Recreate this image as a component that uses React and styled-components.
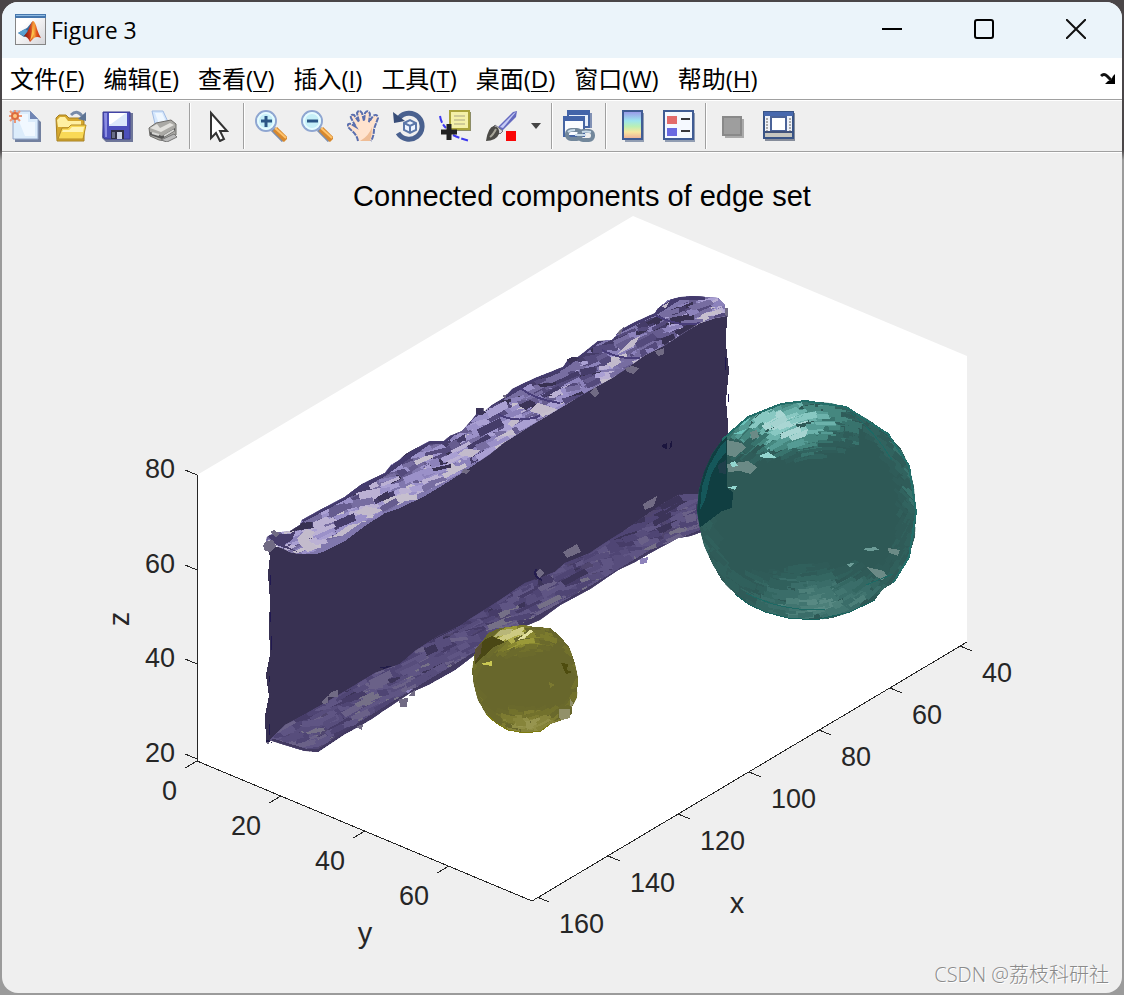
import styled, { createGlobalStyle } from "styled-components";

const GlobalStyle = createGlobalStyle`
  * {
    box-sizing: border-box;
  }

  body {
    margin: 0;
    background: linear-gradient(#4a4648 0, #4a4648 150px, #9b9b9b 160px, #9b9b9b 100%);
    font-family: "Open Sans", "Noto Sans CJK SC", sans-serif;
    color: #000;
  }
`;

const Window = styled.main`
  display: flex;
  flex-direction: column;
  min-height: calc(100vh - 4px);
  margin: 2px;
  background: #efefef;
  border-radius: 16px;
  overflow: hidden;
`;

const TitleBar = styled.header`
  display: flex;
  align-items: center;
  height: 56px;
  padding-left: 13px;
  background: #ebf4fa;
`;

const Title = styled.h1`
  flex: 1;
  margin: 0 0 0 4px;
  font-size: 23px;
  font-weight: 400;
`;

const WindowButton = styled.button`
  display: flex;
  align-items: center;
  justify-content: center;
  width: 92px;
  height: 54px;
  margin-bottom: 2px;
  padding: 0;
  border: none;
  background: transparent;
`;

const MenuBar = styled.nav`
  display: flex;
  align-items: center;
  gap: 19px;
  height: 42px;
  padding: 0 6px 0 8px;
  background: #fff;
  border-bottom: 1px solid #a0a0a0;
`;

const MenuButton = styled.button`
  padding: 0;
  border: none;
  background: transparent;
  font-family: inherit;
  font-size: 24px;
  line-height: 36px;
  color: #000;
  white-space: nowrap;

  u {
    text-decoration-thickness: 1px;
    text-underline-offset: 3px;
  }
`;

const DockButton = styled(MenuButton)`
  display: flex;
  margin-left: auto;
`;

const ToolBar = styled.div`
  display: flex;
  align-items: center;
  height: 52px;
  border-top: 1px solid #fff;
  border-bottom: 1px solid #a0a0a0;
  box-shadow: 0 1px 0 #fff;
`;

const ToolButton = styled.button`
  display: flex;
  align-items: center;
  justify-content: center;
  width: ${({ $narrow }) => ($narrow ? "24px" : "46px")};
  height: 46px;
  padding: 0;
  border: none;
  background: transparent;
`;

const Separator = styled.span`
  width: 2px;
  height: 46px;
  margin: 0 3px;
  border-left: 1px solid #a0a0a0;
  border-right: 1px solid #fff;
`;

const FigureArea = styled.section`
  position: relative;
  display: flex;
  flex: 1;
`;

const Plot = styled.svg`
  display: block;
  width: 100%;
  height: auto;
  font-family: "Liberation Sans", Arial, sans-serif;
`;

const Watermark = styled.span`
  position: absolute;
  right: 13px;
  bottom: 4px;
  font-family: "Open Sans", "Noto Sans CJK SC", sans-serif;
  font-size: 20px;
  font-weight: 300;
  line-height: 28px;
  color: #8a8a8a;
  text-shadow: 1px 1px 0 #fff;
`;

const menus = [
  ["文件", "F"],
  ["编辑", "E"],
  ["查看", "V"],
  ["插入", "I"],
  ["工具", "T"],
  ["桌面", "D"],
  ["窗口", "W"],
  ["帮助", "H"],
];

const Icon = ({ children, size = 32 }) => (
  <svg width={size} height={size} viewBox={`0 0 ${size} ${size}`} aria-hidden="true">
    {children}
  </svg>
);

const MatlabIcon = () => (
  <svg width="32" height="32" viewBox="0 0 32 32" aria-hidden="true">
    <defs>
      <linearGradient id="logoPaper" x1="0" y1="0" x2="1" y2="1">
        <stop offset="0.3" stopColor="#fff" />
        <stop offset="1" stopColor="#d4d4d8" />
      </linearGradient>
      <linearGradient id="membrane" x1="0" y1="0" x2="1" y2="0">
        <stop offset="0" stopColor="#7a1d10" />
        <stop offset="0.35" stopColor="#c8371a" />
        <stop offset="0.6" stopColor="#f7a23a" />
        <stop offset="0.75" stopColor="#e0531c" />
        <stop offset="1" stopColor="#b52c12" />
      </linearGradient>
    </defs>
    <rect x="0.5" y="0.5" width="30" height="30" fill="url(#logoPaper)" stroke="#858585" />
    <rect x="0" y="0" width="31" height="4" fill="#4677ad" />
    <rect x="1" y="1" width="29" height="1" fill="#8fbbe2" />
    <path d="M3 19 L10 15 L12 14 L17 8 L17 14 L12 22 L9 23 Z" fill="#37699f" />
    <path d="M3 19 L10 15 L13 17 L9 22 Z" fill="#5aa0cf" />
    <path d="M9 22 Q13 18 15 12 Q17 7 18 7 Q20 7 22 15 Q24 21 26 24 Q22 22 19 24 L15 28 Q13 23 9 22 Z" fill="url(#membrane)" />
    <path d="M18 9 Q17 20 15 27 Q18 23 19 20 Z" fill="#fbc04c" />
  </svg>
);

const NewIcon = () => (
  <Icon>
    <path d="M6 3 H22 L32 12 V32 H6 Z" fill="#72809f" />
    <path d="M4 1 H21 L29 9 V29 H4 Z" fill="#dcecfb" stroke="#8fa3c6" />
    <path d="M21 1 V9 H29 Z" fill="#7186b4" />
    <path d="M7 4 H19 V12 H26 V26 H16 Z" fill="#f1f8ff" />
    <path d="M6 0 V13 M0 6 H13 M1 1 L11 11 M11 1 L1 11" stroke="#ec9675" strokeWidth="2" />
    <circle cx="6" cy="6" r="3" fill="#ffc986" stroke="#dc6b3f" strokeWidth="2" />
  </Icon>
);

const OpenIcon = () => (
  <Icon>
    <path d="M1 8 L4 5 H11 L14 8 H27 L29 11 V31 H2 Z" fill="#d5a72e" stroke="#a68022" />
    <path d="M2 10 L5 7 H10 L13 11 H26 V17 H3 Z" fill="#fff0a2" />
    <path d="M7 18 H13 L16 15 H31 L28 29 H3 Z" fill="#f9d956" stroke="#b38b27" />
    <path d="M8 20 H14 L17 17 H29 L28 22 H7 Z" fill="#fff4b2" />
    <path d="M16 5 Q22 -1 27 6" fill="none" stroke="#778aa8" strokeWidth="3" />
    <path d="M23 9 L31 2 L31 11 Z" fill="#5e7494" />
  </Icon>
);

const SaveIcon = () => (
  <Icon>
    <path d="M3 3 H32 V32 H5 L1 28 Z" fill="#6e7699" />
    <path d="M2 2 H29 V29 H4 L2 27 Z" fill="#4c4fbb" stroke="#393b91" />
    <path d="M3 3 H6 V27 H4 Z" fill="#8c8ee2" />
    <path d="M8 3 H26 V16 H8 Z" fill="#dbe8fb" />
    <path d="M8 3 H25 L10 14 H8 Z" fill="#fff" />
    <rect x="10" y="20" width="13" height="9" fill="#303044" />
    <rect x="16" y="22" width="5" height="7" fill="#ccd3e5" />
    <rect x="11" y="22" width="3" height="6" fill="#6a6f86" />
  </Icon>
);

const PrintIcon = () => (
  <Icon>
    <path d="M5 1 H16 L22 14 L9 18 Z" fill="#d5e7fd" stroke="#a1bbe2" />
    <path d="M8 3 H15 L19 12 L12 14 Z" fill="#eff7ff" />
    <path d="M2 18 L9 13 L24 10 L29 14 L29 25 L20 31 L12 30 L3 26 Z" fill="#aaa9a5" stroke="#6d6c69" />
    <path d="M3 18 L10 14 L13 18 L23 13 L27 15 L14 22 Z" fill="#e2e1dd" />
    <path d="M3 22 L15 26 L28 18 V21 L15 29 L3 25 Z" fill="#565656" />
    <path d="M5 23 L12 25 M17 26 L27 20" stroke="#d6d6d3" strokeWidth="2" />
    <path d="M14 30 L27 24 L30 27 L20 32 Z" fill="#bbb" stroke="#777" />
  </Icon>
);

const CursorIcon = () => (
  <Icon>
    <path d="M10 3 V28 L15 23 L19 31 L23 29 L19 21 H26 Z" fill="#fff" stroke="#333" strokeWidth="2" />
  </Icon>
);

const ZoomIcon = ({ plus }) => (
  <Icon>
    <path d="M18 19 L29 30" stroke="#7d8fae" strokeWidth="6" />
    <path d="M20 19 L31 30" stroke="#d7882d" strokeWidth="6" />
    <path d="M20 18 L31 28" stroke="#ffc36c" strokeWidth="2" />
    <circle cx="11" cy="11" r="10" fill="#c5eff8" stroke="#8fa6d1" strokeWidth="2" />
    <circle cx="11" cy="11" r="8" fill="none" stroke="#e6fbff" strokeWidth="2" />
    <path d="M6 11 H17" stroke="#2a5686" strokeWidth="3" />
    {plus && <path d="M11 6 V17" stroke="#2a5686" strokeWidth="3" />}
  </Icon>
);

const HandIcon = () => (
  <Icon>
    <path
      d="M11 31 Q10 25 5 21 L1 17 Q0 13 4 14 L9 17 L4 8 Q3 4 7 5 L12 12 L10 3 Q12 -1 15 3 L17 11 L18 3 Q21 -1 23 4 L22 12 L26 6 Q30 3 31 8 L27 19 Q27 26 24 31 Z"
      fill="#ffe3ce"
    />
    <path
      d="M11 31 Q10 25 5 21 L1 17 Q0 13 4 14 L9 17 L4 8 Q3 4 7 5 L12 12 L10 3 Q12 -1 15 3 L17 11 L18 3 Q21 -1 23 4 L22 12 L26 6 Q30 3 31 8 L27 19 Q27 26 24 31"
      fill="none"
      stroke="#5a6fae"
      strokeWidth="2"
      strokeDasharray="5 1"
    />
    <path d="M13 31 Q22 26 25 17 Q25 25 23 31 Z" fill="#efbd96" />
  </Icon>
);

const RotateIcon = () => (
  <Icon>
    <path d="M6 8 A13 13 0 1 1 5 23" fill="none" stroke="#4a618f" strokeWidth="5" />
    <path d="M0 2 L1 13 L12 11 Z" fill="#384d78" />
    <path d="M11 13 L17 10 L23 13 V20 L17 23 L11 20 Z" fill="#edf4ff" stroke="#5b77a9" strokeWidth="2" />
    <path d="M11 13 L17 16 L23 13 M17 16 V23" fill="none" stroke="#5b77a9" strokeWidth="2" />
  </Icon>
);

const DataTipIcon = () => (
  <Icon>
    <path d="M1 6 Q2 13 7 18 M14 25 Q22 29 31 31" fill="none" stroke="#3d38ef" strokeWidth="2" strokeDasharray="7 2" />
    <path d="M12 2 H32 V21 H12 Z" fill="#8c8c68" />
    <path d="M11 1 H30 V19 H11 Z" fill="#f4f1a8" stroke="#aaa43a" strokeWidth="2" />
    <path d="M15 6 H26 M15 10 H26 M15 14 H26" stroke="#a9a583" strokeWidth="1" />
    <path d="M2 22 H18 M10 14 V30" stroke="#222" strokeWidth="5" />
  </Icon>
);

const BrushIcon = () => (
  <Icon>
    <path d="M13 17 L28 2 L32 1 L31 7 L17 21 Z" fill="#6469bf" />
    <path d="M15 17 L29 3 L31 2 L18 18 Z" fill="#c5caf5" />
    <path d="M10 15 L18 21 L15 24 L8 17 Z" fill="#d7d7dc" stroke="#74747a" />
    <path d="M1 31 Q3 17 9 16 Q15 17 14 24 Q11 31 1 31 Z" fill="#4c4b47" />
    <path d="M5 27 Q8 25 11 19" fill="none" stroke="#a8a69a" strokeWidth="2" />
    <rect x="21" y="21" width="10" height="10" fill="#fa0606" />
  </Icon>
);

const LinkIcon = () => (
  <Icon>
    <path d="M7 3 H29 V18 H7 Z" fill="#8191b4" />
    <path d="M5 1 H26 V17 H5 Z" fill="#e9f0fb" stroke="#4766a3" strokeWidth="2" />
    <rect x="4" y="0" width="23" height="5" fill="#4364a9" />
    <path d="M1 7 H21 V26 H1 Z" fill="#f9fbff" stroke="#4766a3" strokeWidth="2" />
    <rect x="0" y="6" width="22" height="5" fill="#4364a9" />
    <rect x="4" y="20" width="14" height="9" rx="4" fill="none" stroke="#72879b" strokeWidth="4" />
    <rect x="16" y="21" width="14" height="9" rx="4" fill="none" stroke="#72879b" strokeWidth="4" />
    <path d="M12 25 H23 M5 22 Q7 20 12 20 M19 22 Q22 21 28 22" stroke="#c9dbe9" strokeWidth="2" fill="none" />
  </Icon>
);

const ColorbarIcon = () => (
  <Icon>
    <defs>
      <linearGradient id="rainbow" x1="0" y1="0" x2="0" y2="1">
        <stop offset="0" stopColor="#9993e8" />
        <stop offset="0.35" stopColor="#9de6ee" />
        <stop offset="0.55" stopColor="#baf0b5" />
        <stop offset="0.75" stopColor="#f8e7a0" />
        <stop offset="1" stopColor="#edac98" />
      </linearGradient>
    </defs>
    <path d="M8 3 H27 V32 H8 Z" fill="#919db2" />
    <path d="M6 1 H25 V29 H6 Z" fill="url(#rainbow)" stroke="#405c94" strokeWidth="2" />
  </Icon>
);

const LegendIcon = () => (
  <Icon>
    <path d="M2 3 H32 V32 H2 Z" fill="#919db2" />
    <path d="M1 1 H30 V29 H1 Z" fill="#f5f9ff" stroke="#405c94" strokeWidth="2" />
    <rect x="4" y="6" width="10" height="8" fill="#e36b6b" />
    <rect x="4" y="18" width="10" height="8" fill="#6969e1" />
    <path d="M18 9 H27 M18 21 H27" stroke="#38383c" strokeWidth="2" />
  </Icon>
);

const HideToolsIcon = () => (
  <Icon>
    <path d="M8 9 H27 V28 H8 Z" fill="#aaa" />
    <path d="M6 7 H24 V25 H6 Z" fill="#9e9e9e" stroke="#898989" strokeWidth="2" />
  </Icon>
);

const ShowToolsIcon = () => (
  <Icon>
    <path d="M2 3 H32 V31 H2 Z" fill="#858c9a" />
    <path d="M1 2 H30 V28 H1 Z" fill="#eff2f8" stroke="#395486" strokeWidth="2" />
    <rect x="1" y="2" width="29" height="4" fill="#4768ad" />
    <rect x="2" y="23" width="27" height="4" fill="#c6c6bf" />
    <path d="M4 8 V21 M27 8 V21" stroke="#aaa" strokeWidth="2" strokeDasharray="2 1" />
    <path d="M8 7 H23 V21 H8 Z" fill="#fff" stroke="#4b6398" strokeWidth="2" />
    <path d="M2 22 H29" stroke="#40527b" strokeWidth="2" />
  </Icon>
);

const toolGroups = [
  [
    ["新建图窗", <NewIcon />],
    ["打开文件", <OpenIcon />],
    ["保存图窗", <SaveIcon />],
    ["打印图窗", <PrintIcon />],
  ],
  [["编辑绘图", <CursorIcon />]],
  [
    ["放大", <ZoomIcon plus />],
    ["缩小", <ZoomIcon />],
    ["平移", <HandIcon />],
    ["三维旋转", <RotateIcon />],
    ["数据游标", <DataTipIcon />],
    ["刷亮数据", <BrushIcon />],
    ["刷亮选项", <Icon size={10}><path d="M0 2 H10 L5 8 Z" fill="#444" /></Icon>, true],
  ],
  [["链接绘图", <LinkIcon />]],
  [
    ["插入颜色栏", <ColorbarIcon />],
    ["插入图例", <LegendIcon />],
  ],
  [
    ["隐藏绘图工具", <HideToolsIcon />],
    ["显示绘图工具", <ShowToolsIcon />],
  ],
];

/* ---------- surfaces ---------- */

const makeRandom = (seed) => {
  let state = seed;
  return () => {
    state = (state * 1664525 + 1013904223) % 4294967296;
    return state / 4294967296;
  };
};

const clamp = (value) => Math.max(0, Math.min(1, value));

const pick = (palette, tone) => palette[Math.min(palette.length - 1, Math.floor(clamp(tone) * palette.length))];

const sliver = (x, y, length, thickness, angle, skew) => {
  const ux = (Math.cos(angle) * length) / 2;
  const uy = (Math.sin(angle) * length) / 2;
  const vx = (Math.cos(angle + skew) * thickness) / 2;
  const vy = (Math.sin(angle + skew) * thickness) / 2;
  return [
    [x - ux - vx, y - uy - vy],
    [x + ux - vx, y + uy - vy],
    [x + ux + vx, y + uy + vy],
    [x - ux + vx, y - uy + vy],
  ]
    .map(([px, py]) => `${px.toFixed(1)},${py.toFixed(1)}`)
    .join(" ");
};

// facets scattered along a straight strip, light towards its lower side
const stripFacets = ({ from, to, half, count, seed, palette, lift, contrast }) => {
  const random = makeRandom(seed);
  const dx = to[0] - from[0];
  const dy = to[1] - from[1];
  const slope = Math.atan2(dy, dx);
  return Array.from({ length: count }, () => {
    const s = random();
    const t = random() * 2 - 1;
    const wave = Math.sin(s * 61 + t * 2) * 0.18 + Math.sin(s * 149 - t * 3) * 0.16 + Math.sin(s * 27) * 0.06;
    const edge = Math.max(0, Math.abs(t) - 0.85) * 1.6;
    const tone = lift + (wave + t * 0.22 + (random() - 0.5) * 0.5) * contrast - edge;
    const angle = random() < 0.6 ? slope * (0.8 + random() * 0.3) : -0.1 - random() * 0.2;
    return {
      points: sliver(
        from[0] + dx * s,
        from[1] + dy * s + t * half,
        8 + random() * 20,
        3 + random() * 5,
        angle,
        1 + random() * 0.8
      ),
      fill: pick(palette, tone),
    };
  });
};

// facets of a ball: bright cap, dim floor, flat middle
const ballFacets = ({ cx, cy, r, count, seed, palette, floorPalette, cell }) => {
  const random = makeRandom(seed);
  const facets = [];
  for (let i = 0; i < count; i += 1) {
    const a = random() * Math.PI * 2;
    const d = Math.sqrt(random());
    const x = Math.cos(a) * d;
    const y = Math.sin(a) * d;
    const noise = (random() - 0.5) * 0.34;
    const cap = 1.02 - Math.hypot((x + 0.2) / 0.72, (y + 0.8) / 0.36);
    const floor = 0.95 - Math.hypot((x - 0.12) / 0.85, (y - 0.86) / 0.34) * 0.9;
    const rim = (d - 0.86) * 1.2;
    const upper = y < 0;
    const tone = Math.max(upper ? cap : floor, rim);
    if (tone > 0 && tone + noise > 0.02) {
      facets.push({
        points: sliver(
          cx + x * r,
          cy + y * r,
          cell * (0.8 + random()),
          cell * (0.25 + random() * 0.3),
          upper ? x * 1.1 - 0.2 : -x * 1.1 - 0.1,
          1.1 + random() * 0.7
        ),
        fill: pick(upper ? palette : floorPalette, tone + noise),
      });
    }
  }
  return facets;
};

const Facets = ({ items }) => (
  <g>
    {items.map((item, index) => (
      <polygon key={index} points={item.points} fill={item.fill} />
    ))}
  </g>
);

const ridgeOutline =
  "264,547 267,537 273,533 290,531 300,525 302,520 320,510 345,497 362,484 385,473 391,465 398,461 406,454 415,449 430,441 444,441 450,436 462,431 472,420 478,412 485,411 492,405 504,398 512,389 516,387 535,378 563,367 569,358 578,357 598,341 612,340 620,330 635,322 655,313 658,308 668,300 680,297 692,296 705,297 718,298 725,305 727,316 715,318 700,323 685,332 665,345 645,355 630,366 612,378 590,390 570,402 545,417 530,426 505,442 490,454 465,471 440,487 425,496 400,508 385,513 365,526 345,541 325,551 317,554 300,554 290,552 275,545";

const footOutline =
  "270,740 285,725 300,717 325,703 350,688 375,673 400,664 415,651 440,635 460,626 470,619 500,600 525,583 555,572 565,563 590,553 605,543 625,530 650,512 665,502 680,494 704,494 704,531 690,536 678,538 665,545 650,553 635,562 618,570 590,589 560,605 540,620 520,628 473,656 455,670 430,684 410,693 395,703 370,720 360,726 345,734 330,744 318,752 305,751 285,745 272,741";

const wallOutline =
  "267,547 270,556 268,574 270,600 269,625 270,655 266,675 269,696 265,716 266,741 285,742 330,735 400,694 473,650 550,604 640,553 704,525 727,515 725,480 727,450 728,424 726,400 729,370 726,345 727,312 690,320 600,375 500,436 400,498 320,545";

const ballOutline =
  "805,401 830,403 846,407 858,414 872,422 888,434 901,449 909,466 914,488 916,512 915,536 909,557 897,577 893,583 882,590 875,600 864,605 850,612 833,618 815,620 788,618 765,612 748,604 735,594 722,581 711,561 704,545 700,529 697,511 699,490 704,472 712,454 722,440 737,428 748,417 765,409 781,404";

const smallBallOutline =
  "515,626 522,625 535,627 550,628 560,636 569,647 574,660 578,678 577,697 572,707 572,714 562,720 550,724 541,731 525,733 508,730 496,723 486,714 478,700 474,685 472,672 475,650 484,639 488,633 500,628";

const purples = ["#383152", "#453c69", "#544a7c", "#665c8f", "#776da1", "#8c82bb", "#9b91c9", "#aaa0d3", "#bbb1d4", "#c6bfce"];
const dimPurples = ["#3c3459", "#463c68", "#4f4574", "#574d7c", "#5f5584", "#6a6188", "#757087"];
const teals = ["#2f5c59", "#31635f", "#38736d", "#45877f", "#559b94", "#6cb2ab", "#88c8c2", "#a9d6d3"];
const dimTeals = ["#2f5b58", "#30605c", "#346762", "#3a6d69", "#417570", "#4c7f79", "#588983"];
const olives = ["#6b6a2c", "#72712c", "#7c7b2d", "#888730", "#9a9938", "#afad4a", "#cdca82"];
const dimOlives = ["#6a692c", "#72712c", "#7d7b31", "#86843a", "#908e45", "#97954f"];

const ridge = stripFacets({
  from: [268, 545],
  to: [725, 308],
  half: 25,
  count: 1150,
  seed: 11,
  palette: purples,
  lift: 0.54,
  contrast: 1.1,
});

const foot = stripFacets({
  from: [270, 742],
  to: [705, 512],
  half: 28,
  count: 1100,
  seed: 29,
  palette: dimPurples,
  lift: 0.5,
  contrast: 0.9,
});

const ball = ballFacets({
  cx: 807,
  cy: 510,
  r: 109,
  count: 1900,
  seed: 5,
  palette: teals,
  floorPalette: dimTeals,
  cell: 12,
});

const smallBall = ballFacets({
  cx: 525,
  cy: 679,
  r: 54,
  count: 480,
  seed: 3,
  palette: olives,
  floorPalette: dimOlives,
  cell: 10,
});

const Wall = () => (
  <g>
    <polygon points={wallOutline} fill="#383152" />
    <clipPath id="footClip">
      <polygon points={footOutline} />
    </clipPath>
    <polygon points={footOutline} fill="#50466f" />
    <g clipPath="url(#footClip)">
      <Facets items={foot} />
      <polyline
        points="272,741 305,751 318,752 345,734 395,703 473,656 520,628 590,589 650,553 704,531"
        fill="none"
        stroke="#423961"
        strokeWidth="5"
      />
    </g>
    <clipPath id="ridgeClip">
      <polygon points={ridgeOutline} />
    </clipPath>
    <polygon points={ridgeOutline} fill="#8077ad" />
    <g clipPath="url(#ridgeClip)">
      <Facets items={ridge} />
      <polyline
        points="302,520 345,497 385,473 430,441 444,441 478,412 535,378 563,367 598,341 655,313 680,297 705,297"
        fill="none"
        stroke="#443b6d"
        strokeWidth="5"
      />
      <g fill="#c3bbcc">
        <path d="M297 538 L306 529 L315 532 L308 540 L318 548 L308 552 L300 545 Z" />
        <path d="M354 513 L366 506 L383 510 L370 516 Z" />
        <path d="M332 537 L349 525 L361 523 L342 536 Z" />
        <path d="M457 455 L465 449 L481 450 L472 457 Z" />
        <path d="M507 424 L514 417 L520 421 L512 427 Z" />
        <path d="M529 411 L538 403 L556 409 L540 414 Z" />
        <path d="M606 364 L617 358 L622 362 L612 368 Z" />
        <path d="M630 341 L640 336 L634 346 L618 354 Z" />
        <path d="M661 307 L669 302 L666 308 Z M714 309 L722 311 L718 314 Z" />
      </g>
      <path
        d="M602 350 Q620 360 640 358 M655 315 Q680 328 700 323 M520 388 Q536 400 560 403 M498 414 Q515 424 540 416"
        fill="none"
        stroke="#483d79"
        strokeWidth="2"
      />
      <path d="M266 535 L290 534 L296 530 L292 540 L284 545 L300 553 L276 545 Z" fill="#463c6b" />
      <path d="M377 497 L388 491 L390 498 L380 502 Z M518 405 L530 400 L536 403 L526 410 Z" fill="#3c3458" />
    </g>
    <g fill="#716b84">
      <path d="M263 546 L266 541 L273 540 L276 546 L271 552 L265 551 Z" />
      <path d="M270 532 L274 530 L280 534 L276 537 Z" />
      <path d="M625 368 L632 366 L639 368 L634 374 L627 372 Z" />
      <path d="M655 351 L664 348 L664 354 L658 356 Z" />
      <path d="M590 392 L596 387 L599 393 L595 398 Z" />
      <path d="M463 469 L470 470 L467 474 L462 473 Z" />
      <path d="M617 333 L624 327 L620 335 Z" />
      <path d="M643 504 L657 496 L654 506 L645 510 Z" />
      <path d="M563 552 L577 544 L581 552 L567 558 Z" />
      <path d="M322 701 L328 696 L328 703 L323 704 Z M331 692 L338 690 L338 697 L328 697 Z" />
      <path d="M399 699 L408 698 L407 707 L400 707 Z M408 696 L415 690 L415 696 Z" />
      <path d="M536 572 L540 568 L544 573 L539 579 Z" />
      <path d="M356 727 L363 724 L362 730 Z M265 742 L270 741 L268 745 Z" />
      <path d="M502 396 L507 394 L505 399 Z M478 412 L484 408 L483 414 Z M725 308 L728 308 L728 317 L725 315 Z" />
    </g>
    <path d="M476 408 L483 408 L483 415 L476 414 Z M566 360 L572 357 L580 358 L570 364 Z" fill="#3b3358" />
    <path d="M640 559 L648 557 L647 563 L640 564 Z M405 691 L412 689 L408 694 Z" fill="#8d82ba" />
    <path d="M662 445 L667 443 L667 449 L663 448 Z M671 441 L672 441 L672 446 L669 450 Z" fill="#1b153e" />
    <path
      d="M270 575 V585 M270 612 V622 M271 636 V650 M269 676 V682 M269 724 V735 M725 357 V370 M728 394 V402"
      stroke="#201850"
    />
    <path d="M536 569 Q533 577 542 580" fill="none" stroke="#241d4e" strokeWidth="2" />
    <path d="M264 741 L273 743 L268 740 Z M379 667 L392 666 L384 669 Z" fill="#211b48" />
  </g>
);

const BigBall = () => (
  <g>
    <clipPath id="ballClip">
      <polygon points={ballOutline} />
    </clipPath>
    <polygon points={ballOutline} fill="#2e5956" />
    <g clipPath="url(#ballClip)">
      <Facets items={ball} />
      <path d="M690 400 H727 V488 L733 492 L732 508 L722 511 L690 535 Z" fill="#103e41" />
      <path d="M709 466 L721 445 L726 440 V452 L718 462 L711 475 L705 500 L700 510 L702 486 Z" fill="#15575a" />
      <path d="M718 465 L726 460 V474 L719 473 Z" fill="#203f4b" />
      <path d="M727 440 L741 443 L746 448 L735 457 L727 455 Z M727 464 L748 461 L757 467 L751 474 L740 471 L728 472 Z" fill="#6b8a86" />
      <path d="M750 432 L757 430 L759 437 L752 440 Z M867 567 L884 571 L887 576 L882 580 L874 575 Z M888 548 L900 550 L898 556 L889 553 Z" fill="#6b8a86" />
      <path d="M759 456 L768 452 L777 458 L764 458 Z M730 463 L735 461 L738 466 L732 467 Z M727 487 L737 486 L735 490 Z" fill="#93d6cf" />
      <path d="M733 434 L746 429 L741 434 Z M735 427 L750 418 L743 425 Z" fill="#6bc1b9" />
      <path d="M768 424 L785 415 L788 420 L776 427 Z M788 437 L808 429 L806 436 L792 441 Z" fill="#a5d3d0" />
      <path d="M862 549 L875 547 L880 550 L868 551 Z M846 564 L854 563 L850 567 Z" fill="#6c9c97" />
      <path
        d="M850 412 Q874 430 892 460 M746 593 Q785 613 825 609 M866 585 L893 574"
        fill="none"
        stroke="#1d6964"
        strokeWidth="1"
      />
    </g>
    <polyline
      points="722,440 748,417 781,404 805,401 846,407 888,434 909,466 916,512 909,557 893,583"
      fill="none"
      stroke="#236e69"
      strokeWidth="2"
    />
    <polyline points="735,594 748,604 765,612 788,618 815,620 850,612 875,600" fill="none" stroke="#17635e" strokeWidth="1" />
  </g>
);

const SmallBall = () => (
  <g>
    <clipPath id="smallBallClip">
      <polygon points={smallBallOutline} />
    </clipPath>
    <polygon points={smallBallOutline} fill="#68672c" />
    <g clipPath="url(#smallBallClip)">
      <Facets items={smallBall} />
      <path d="M475 650 L484 640 L492 636 L505 642 L492 648 L484 656 L475 664 Z" fill="#4a4715" />
      <path d="M475 648 L482 643 L481 653 L475 662 Z" fill="#5a4f34" />
      <path d="M480 664 L492 661 L492 666 L486 665 Z" fill="#c9c752" />
      <path d="M516 641 L530 630 L534 631 L524 638 Z" fill="#e2dfa0" />
      <path d="M494 637 L500 630 L513 629 L510 634 Z" fill="#b8b679" />
      <path d="M561 663 L568 664 L567 670 L572 672 L566 674 Z" fill="#4e4c0e" />
      <path d="M549 682 L555 685 L550 688 Z" fill="#7b7930" />
    </g>
    <path d="M559 709 H570 V718 L562 720 L559 718 Z M570 698 L573 703 L572 708 L570 705 Z" fill="#92916a" />
    <polyline points="486,714 496,723 508,730 525,733 541,731 550,724" fill="none" stroke="#7d7b10" strokeWidth="1" />
  </g>
);

const zTicks = [
  [80, 478],
  [60, 573],
  [40, 667],
  [20, 762],
];

const yTicks = [
  [0, 197, 761],
  [20, 281, 796],
  [40, 365, 831],
  [60, 449, 866],
];

const xTicks = [
  [160, 537, 897],
  [140, 608, 856],
  [120, 678, 814],
  [100, 749, 772],
  [80, 819, 730],
  [60, 890, 688],
  [40, 960, 646],
];

const Axes = () => (
  <g>
    <g stroke="#262626" fill="none" shapeRendering="crispEdges">
      <polyline points="197,475 197,761 532,901 967,642" />
      {zTicks.map(([value, y]) => (
        <path key={value} d={`M197 ${y - 3} l-12 -5`} />
      ))}
      {yTicks.map(([value, x, y]) => (
        <path key={value} d={`M${x} ${y} l-12 7`} />
      ))}
      {xTicks.map(([value, x, y]) => (
        <path key={value} d={`M${x} ${y} l12 5`} />
      ))}
    </g>
    <g fill="#262626" fontSize="27">
      {zTicks.map(([value, y]) => (
        <text key={value} x="175" y={y} textAnchor="end">
          {value}
        </text>
      ))}
      {yTicks.map(([value, x, y]) => (
        <text key={value} x={x - 20} y={y + 39} textAnchor="end">
          {value}
        </text>
      ))}
      {xTicks.map(([value, x, y]) => (
        <text key={value} x={x + 22} y={y + 36}>
          {value}
        </text>
      ))}
    </g>
    <g fill="#262626" fontSize="29" textAnchor="middle">
      <text x="737" y="913">x</text>
      <text x="365" y="943">y</text>
      <text transform="translate(129 619) rotate(-90)">z</text>
    </g>
  </g>
);

const App = () => (
  <>
    <GlobalStyle />
    <Window>
      <TitleBar>
        <MatlabIcon />
        <Title>Figure 3</Title>
        <WindowButton aria-label="最小化">
          <Icon size={20}>
            <path d="M0 10 H20" stroke="#000" strokeWidth="2" />
          </Icon>
        </WindowButton>
        <WindowButton aria-label="最大化">
          <Icon size={20}>
            <rect x="1" y="1" width="18" height="18" rx="2" fill="none" stroke="#000" strokeWidth="2" />
          </Icon>
        </WindowButton>
        <WindowButton aria-label="关闭">
          <Icon size={20}>
            <path d="M0 0 L20 20 M20 0 L0 20" stroke="#111" strokeWidth="2" />
          </Icon>
        </WindowButton>
      </TitleBar>
      <MenuBar>
        {menus.map(([label, key]) => (
          <MenuButton key={key}>
            {label}(<u>{key}</u>)
          </MenuButton>
        ))}
        <DockButton aria-label="停靠图窗">
          <Icon size={16}>
            <path d="M1 5 Q4 2 7 5 L11 9" fill="none" stroke="#111" strokeWidth="3" />
            <path d="M15 3 V13 H5 L8 10 L11 9 L13 5 Z" fill="#000" />
          </Icon>
        </DockButton>
      </MenuBar>
      <ToolBar role="toolbar">
        {toolGroups.flatMap((group, index) => [
          index > 0 && <Separator key={`separator-${index}`} />,
          ...group.map(([label, icon, narrow]) => (
            <ToolButton key={label} aria-label={label} $narrow={narrow}>
              {icon}
            </ToolButton>
          )),
        ])}
      </ToolBar>
      <FigureArea>
        <Plot viewBox="2 152 1120 841" role="img" aria-label="Connected components of edge set">
          <polygon points="197,475 633,216 967,356 967,642 532,901 197,761" fill="#fff" />
          <text x="582" y="206" fontSize="29" textAnchor="middle">
            Connected components of edge set
          </text>
          <Axes />
          <g shapeRendering="crispEdges">
            <Wall />
            <BigBall />
            <SmallBall />
          </g>
        </Plot>
        <Watermark>CSDN @荔枝科研社</Watermark>
      </FigureArea>
    </Window>
  </>
);

export default App;
